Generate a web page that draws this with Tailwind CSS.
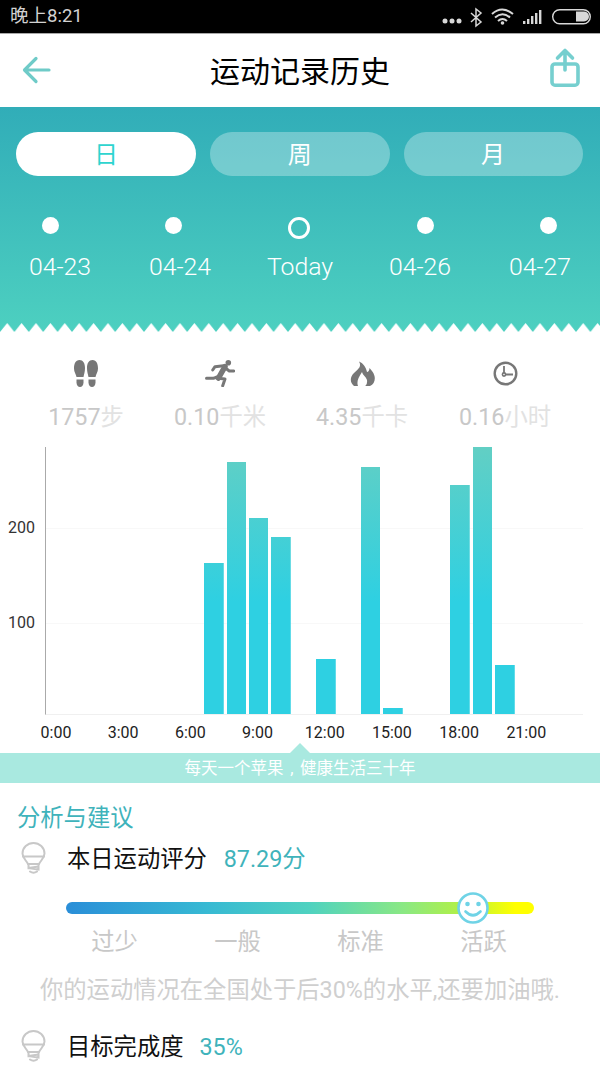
<!DOCTYPE html>
<html><head><meta charset="utf-8"><script src="https://cdn.jsdelivr.net/npm/@tailwindcss/browser@4"></script></head>
<body class="bg-white">
<div class="w-[600px] h-[1067px] overflow-hidden bg-white font-['Roboto','Noto_Sans_CJK_SC',sans-serif]">
  <!-- status bar -->
  <div class="h-[34px] bg-black border-b border-[#a8a8a8] flex items-center justify-between pl-[10px] pr-[9px]">
    <span class="text-[18.5px] leading-[35px] text-[#d2d2d2]">晚上8:21</span>
    <svg class="w-[150px] h-[33px]" viewBox="0 0 150 33" fill="none">
      <g fill="#d8d8d8"><circle cx="4" cy="21" r="2.5"/><circle cx="11" cy="21" r="2.5"/><circle cx="18" cy="21" r="2.5"/></g>
      <path d="M30 13L40 22L35 26V9L40 13L30 22" stroke="#d8d8d8" stroke-width="1.5"/>
      <path d="M51 14Q61 5 72 14M54 17.5Q61.5 11 69 17.5M57 21Q61.5 17 66 21" stroke="#d8d8d8" stroke-width="2"/>
      <circle cx="61.5" cy="23" r="1.8" fill="#d8d8d8"/>
      <g fill="#d8d8d8"><rect x="82" y="21" width="2.4" height="3"/><rect x="86" y="19" width="2.4" height="5"/><rect x="90" y="16" width="2.4" height="8"/><rect x="94" y="13" width="2.4" height="11"/><rect x="98" y="10" width="2.4" height="14"/></g>
      <rect x="111.7" y="9.7" width="37.6" height="14" rx="7" stroke="#d8d8d8" stroke-width="1.4"/>
      <path d="M135 11.5H143a5 5 0 0 1 5 5a5 5 0 0 1-5 5H135Z" fill="#d8d8d8"/>
    </svg>
  </div>
  <!-- title bar -->
  <div class="h-[73px] flex justify-between pl-[22px] pr-[18px]">
    <svg class="w-[30px] h-[30px] mt-[21px]" viewBox="0 0 30 30" fill="none" stroke="#6fcbc8" stroke-width="3.2" stroke-linecap="round" stroke-linejoin="round"><path d="M27 15H3M14 3.5L2.5 15L14 26.5"/></svg>
    <h1 class="text-[30px] leading-[75px] text-black">运动记录历史</h1>
    <svg class="w-[34px] h-[44px] mt-[12px]" viewBox="0 0 34 44" fill="none" stroke="#76cfcf" stroke-width="3.6" stroke-linecap="round" stroke-linejoin="round"><rect x="4" y="18" width="26" height="21.2" rx="3"/><path d="M17 24V5M9.5 12L17 4.5L24.5 12"/></svg>
  </div>
  <!-- teal panel -->
  <section class="bg-linear-to-b from-[#31adb8] to-[#4dd0c0] pt-[25px]">
    <div class="grid grid-cols-[180px_179.5px_179px] gap-[14px] pl-[16px]">
      <div class="h-[44px] rounded-full bg-white text-[#2ed4cf] text-[24px] leading-[46px] text-center">日</div>
      <div class="h-[44px] rounded-full bg-white/30 text-white text-[24px] leading-[46px] text-center">周</div>
      <div class="h-[44px] rounded-full bg-white/30 text-white text-[24px] leading-[46px] text-center">月</div>
    </div>
    <div class="grid grid-cols-[100px_146px_106px_146px_100px] mt-[41px] h-[22px]">
      <div class="w-[17px] h-[17px] rounded-full bg-white mx-auto"></div>
      <div class="w-[17px] h-[17px] rounded-full bg-white mx-auto"></div>
      <div class="w-[22px] h-[22px] rounded-full border-[3px] border-white mx-auto"></div>
      <div class="w-[17px] h-[17px] rounded-full bg-white mx-auto"></div>
      <div class="w-[17px] h-[17px] rounded-full bg-white mx-auto"></div>
    </div>
    <div class="grid grid-cols-5 mt-[12px] text-white text-[24.8px] leading-[32px] font-light text-center">
      <span>04-23</span><span>04-24</span><span>Today</span><span>04-26</span><span>04-27</span>
    </div>
    <svg class="block w-[600px] h-[9px] mt-[40px]" viewBox="0 0 600 9"><defs><pattern id="zig" width="14.4" height="9" patternUnits="userSpaceOnUse" x="0"><path d="M0 9L7.2 0L14.4 9Z" fill="#fff"/></pattern></defs><rect width="600" height="9" fill="url(#zig)"/></svg>
  </section>
  <!-- stats -->
  <div class="grid grid-cols-[172px_96px_188px_98px] mt-[28px]">
    <div class="flex flex-col items-center">
      <svg class="w-[26px] h-[27px]" viewBox="0 0 26 27" fill="#777"><path d="M6.5 0C2.5 0 1 4 1 8.5C1 12 3 14 3.5 17H10.5C11 14 12 12 12 8C12 3 10 0 6.5 0Z"/><path d="M3.5 19.5H10.5V22.5C10.5 25 9 27 7 27C5 27 3.5 25 3.5 22.5Z"/><path d="M19.5 0C23.5 0 25 4 25 8.5C25 12 23 14 22.5 17H15.5C15 14 14 12 14 8C14 3 16 0 19.5 0Z"/><path d="M15.5 19.5H22.5V22.5C22.5 25 21 27 19 27C17 27 15.5 25 15.5 22.5Z"/></svg>
      <div class="mt-[14px] text-[23.3px] leading-[32px] text-[#c8c8c8]">1757<span class="text-[#e2e2e2]">步</span></div>
    </div>
    <div class="flex flex-col items-center">
      <svg class="w-[30px] h-[27px]" viewBox="0 0 30 27" fill="none" stroke="#777" stroke-width="3" stroke-linejoin="round" stroke-linecap="round"><circle cx="23.3" cy="2.8" r="2.8" fill="#777" stroke="none"/><path d="M20 6.7L13.5 18" stroke-width="5.5"/><path d="M18.5 5.7L10 6.7L7.7 10M20 7.7L24.3 11H28.8M13.3 18.3L20 19L17.7 25.7M12 17L8.3 18.3H1.5"/></svg>
      <div class="mt-[14px] text-[23.3px] leading-[32px] text-[#c8c8c8]">0.10<span class="text-[#e2e2e2]">千米</span></div>
    </div>
    <div class="flex flex-col items-center">
      <svg class="w-[25px] h-[27px]" viewBox="0 0 25 27" fill="#777"><path d="M9 1.5C12 7 8 9 4 13C0 17 -0.5 22 4 26H8C6.5 22 8 18 12 12C13 16 18 18 17 22C17 24 16 25.5 15 26H20C24 24 25.5 20 24.5 16C23.5 12 21 10 19.5 8C19.5 10 18.5 12 17 12C16 7 13 3 9 1.5Z"/></svg>
      <div class="mt-[14px] text-[23.3px] leading-[32px] text-[#c8c8c8]">4.35<span class="text-[#e2e2e2]">千卡</span></div>
    </div>
    <div class="flex flex-col items-center">
      <svg class="w-[25px] h-[27px]" viewBox="0 0 25 27" fill="none" stroke="#777" stroke-width="2.4"><circle cx="12.5" cy="13.5" r="10.8"/><circle cx="11" cy="14.5" r="1.6" stroke-width="1.6"/><path d="M11 13V6M12.5 14.5H20" stroke-width="1.8"/></svg>
      <div class="mt-[14px] text-[23.3px] leading-[32px] text-[#c8c8c8]">0.16<span class="text-[#e2e2e2]">小时</span></div>
    </div>
  </div>
  <!-- chart -->
  <div class="flex mt-[14px] h-[268px]">
    <div class="w-[45px] pl-[8px] pt-[70px] text-[16px] leading-[22px] text-[#333]">
      <div>200</div><div class="mt-[73px]">100</div>
    </div>
    <div class="relative w-[538px] border-l border-b border-l-[#aaaaaa] border-b-[#f0f0f0]">
      <div class="absolute left-0 right-0 top-[81px] h-px bg-[#f8f8f8]"></div>
      <div class="absolute left-0 right-0 top-[176px] h-px bg-[#f8f8f8]"></div>
      <div class="relative flex items-end h-[267px]">
        <div class="w-[22.4px] shrink-0"></div><div class="w-[22.4px] shrink-0"></div><div class="w-[22.4px] shrink-0"></div><div class="w-[22.4px] shrink-0"></div><div class="w-[22.4px] shrink-0"></div><div class="w-[22.4px] shrink-0"></div><div class="w-[22.4px] shrink-0"></div>
        <div class="w-[22.4px] shrink-0"><div class="w-[19.5px] mx-auto bg-[linear-gradient(#62cfc4,#2ed0e2_58%)] bg-size-[100%_267px] bg-bottom bg-no-repeat" style="height:151px"></div></div>
        <div class="w-[22.4px] shrink-0"><div class="w-[19.5px] mx-auto bg-[linear-gradient(#62cfc4,#2ed0e2_58%)] bg-size-[100%_267px] bg-bottom bg-no-repeat" style="height:252px"></div></div>
        <div class="w-[22.4px] shrink-0"><div class="w-[19.5px] mx-auto bg-[linear-gradient(#62cfc4,#2ed0e2_58%)] bg-size-[100%_267px] bg-bottom bg-no-repeat" style="height:196px"></div></div>
        <div class="w-[22.4px] shrink-0"><div class="w-[19.5px] mx-auto bg-[linear-gradient(#62cfc4,#2ed0e2_58%)] bg-size-[100%_267px] bg-bottom bg-no-repeat" style="height:177px"></div></div>
        <div class="w-[22.4px] shrink-0"></div>
        <div class="w-[22.4px] shrink-0"><div class="w-[19.5px] mx-auto bg-[linear-gradient(#62cfc4,#2ed0e2_58%)] bg-size-[100%_267px] bg-bottom bg-no-repeat" style="height:55px"></div></div>
        <div class="w-[22.4px] shrink-0"></div>
        <div class="w-[22.4px] shrink-0"><div class="w-[19.5px] mx-auto bg-[linear-gradient(#62cfc4,#2ed0e2_58%)] bg-size-[100%_267px] bg-bottom bg-no-repeat" style="height:247px"></div></div>
        <div class="w-[22.4px] shrink-0"><div class="w-[19.5px] mx-auto bg-[linear-gradient(#62cfc4,#2ed0e2_58%)] bg-size-[100%_267px] bg-bottom bg-no-repeat" style="height:6px"></div></div>
        <div class="w-[22.4px] shrink-0"></div><div class="w-[22.4px] shrink-0"></div>
        <div class="w-[22.4px] shrink-0"><div class="w-[19.5px] mx-auto bg-[linear-gradient(#62cfc4,#2ed0e2_58%)] bg-size-[100%_267px] bg-bottom bg-no-repeat" style="height:229px"></div></div>
        <div class="w-[22.4px] shrink-0"><div class="w-[19.5px] mx-auto bg-[linear-gradient(#62cfc4,#2ed0e2_58%)] bg-size-[100%_267px] bg-bottom bg-no-repeat" style="height:267px"></div></div>
        <div class="w-[22.4px] shrink-0"><div class="w-[19.5px] mx-auto bg-[linear-gradient(#62cfc4,#2ed0e2_58%)] bg-size-[100%_267px] bg-bottom bg-no-repeat" style="height:49px"></div></div>
      </div>
    </div>
  </div>
  <div class="grid grid-cols-[repeat(8,67.2px)] ml-[22.4px] mt-[7px] text-[16px] leading-[22px] h-[21px] text-[#222] text-center">
    <span>0:00</span><span>3:00</span><span>6:00</span><span>9:00</span><span>12:00</span><span>15:00</span><span>18:00</span><span>21:00</span>
  </div>
  <!-- tip banner -->
  <div class="w-[20px] h-[10px] mx-auto bg-[#a9e9e0] [clip-path:polygon(50%_0,100%_100%,0_100%)]"></div>
  <div class="h-[30px] bg-[#a9e9e0] text-white text-[16.5px] leading-[32px] text-center">每天一个苹果<span class="inline-block w-[16.5px] text-center">,</span>健康生活三十年</div>
  <!-- analysis -->
  <h2 class="mt-[19px] ml-[17px] text-[23.3px] leading-[32px] text-[#3fb3bb]">分析与建议</h2>
  <div class="mt-[8px] ml-[21px] flex items-center h-[32px]">
    <svg class="w-[25px] h-[32px]" viewBox="0 0 25 32" fill="none" stroke="#c8c8c8" stroke-width="2" stroke-linecap="round"><path d="M7 22C5 18 1.5 16 1.5 11.5A11 10.5 0 0 1 23.5 11.5C23.5 16 20 18 18 22Z"/><path d="M2 14.5H23"/><path d="M7.5 22V26L17.5 24.5M7.5 26L17.5 27.5V22M9 29.5Q12.5 32 16 29.5"/></svg>
    <span class="ml-[21px] pt-[2px] text-[23.3px] leading-[32px] text-[#111]">本日运动评分</span>
    <span class="ml-[17px] pt-[2px] text-[23.3px] leading-[32px] text-[#3fb3bb]">87.29分</span>
  </div>
  <div class="relative mt-[18px] ml-[66px] w-[468px] h-[31px] flex items-center">
    <div class="w-full h-[12px] rounded-full bg-[linear-gradient(to_right,#2a8ed8,#37b9d3_30%,#4fd2c0_52%,#8ae884_72%,#b0f048_84%,#ffff00_96%)]"></div>
    <svg class="absolute left-[391px] top-0 w-[32px] h-[32px]" viewBox="0 0 32 32" fill="#fff" stroke="#6fd3e6" stroke-width="2.6"><circle cx="16" cy="16" r="14.5"/><circle cx="10.5" cy="12" r="2.3" fill="#6fd3e6" stroke="none"/><circle cx="21.5" cy="12" r="2.3" fill="#6fd3e6" stroke="none"/><path d="M8.5 19.5Q16 27 23.5 19.5" fill="none" stroke-linecap="round"/></svg>
  </div>
  <div class="grid grid-cols-[repeat(4,123px)] ml-[53px] mt-[3px] text-[23.3px] leading-[32px] text-[#c8c8c8] text-center">
    <span>过少</span><span>一般</span><span>标准</span><span>活跃</span>
  </div>
  <p class="mt-[16px] text-[23.3px] leading-[32px] text-[#cfcfcf] text-center">你的运动情况在全国处于后30%的水平,还要加油哦.</p>
  <div class="mt-[24px] ml-[21px] flex items-center h-[32px]">
    <svg class="w-[25px] h-[32px]" viewBox="0 0 25 32" fill="none" stroke="#c8c8c8" stroke-width="2" stroke-linecap="round"><path d="M7 22C5 18 1.5 16 1.5 11.5A11 10.5 0 0 1 23.5 11.5C23.5 16 20 18 18 22Z"/><path d="M2 14.5H23"/><path d="M7.5 22V26L17.5 24.5M7.5 26L17.5 27.5V22M9 29.5Q12.5 32 16 29.5"/></svg>
    <span class="ml-[21px] pt-[2px] text-[23.3px] leading-[32px] text-[#111]">目标完成度</span>
    <span class="ml-[16px] pt-[2px] text-[23.3px] leading-[32px] text-[#3fb3bb]">35%</span>
  </div>
</div>
</body></html>
